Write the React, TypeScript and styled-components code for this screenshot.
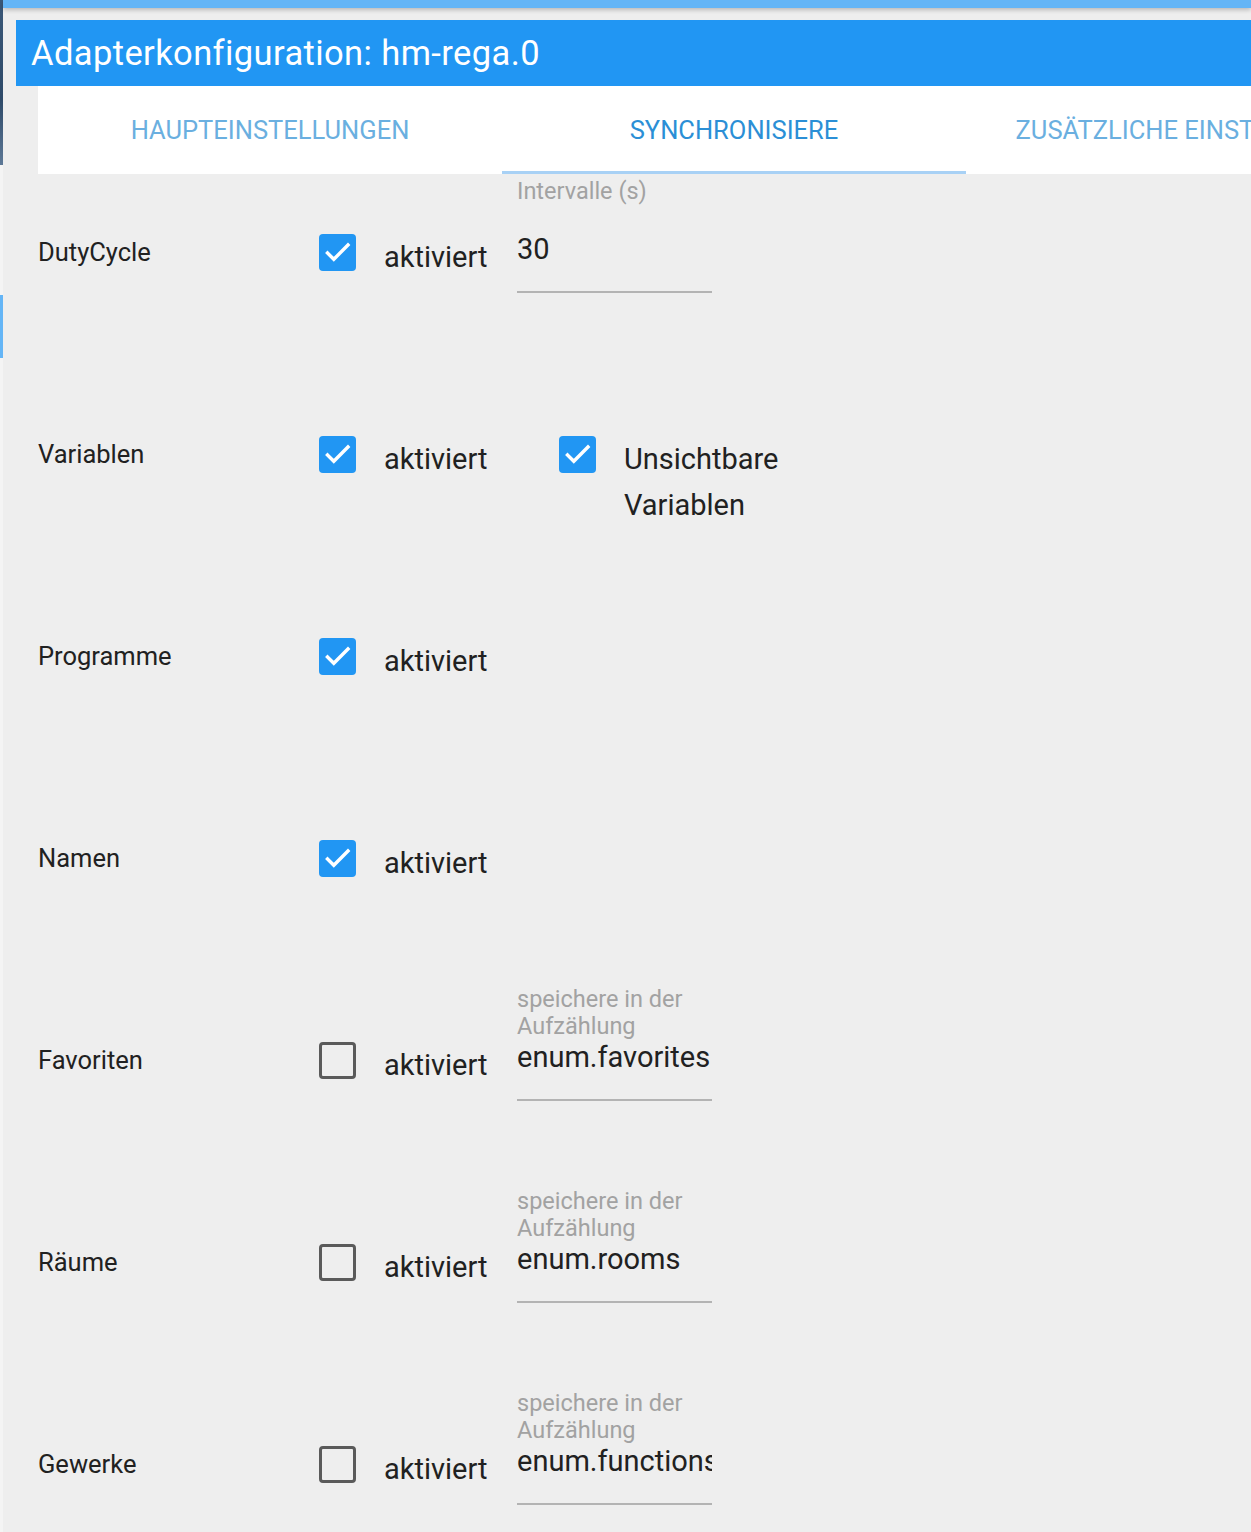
import React from 'react';
import styled, { createGlobalStyle } from 'styled-components';

//styles
const GlobalStyle = createGlobalStyle`
  html, body {
    margin: 0;
    padding: 0;
    background-color: #eeeeee;
    font-family: Roboto, "Liberation Sans", Arial, sans-serif;
  }
  * {
    box-sizing: border-box;
  }
`;

const colors = {
  blue: '#2196f3',
  lightBlue: '#64b5f6',
  tabText: '#6aafe0',
  tabActive: '#2b8fd6',
  tabLine: '#a8d1f5',
  text: '#212121',
  hint: '#a2a2a2',
  line: '#b3b3b3',
  bg: '#eeeeee',
};

//styled
const Page = styled.div`
  display: flex;
  width: 100%;
  height: 1532px;
  overflow: hidden;
  background-color: ${colors.bg};
`;

const EdgeStrip = styled.div`
  display: flex;
  flex-direction: column;
  flex-shrink: 0;
  width: 3px;
  background-color: #f4f4f4;
`;

const EdgeSegment = styled.div<{ $h: number; $top: number; $color: string }>`
  flex-shrink: 0;
  height: ${(p) => p.$h}px;
  margin-top: ${(p) => p.$top}px;
  background: ${(p) => p.$color};
`;

const Main = styled.div`
  flex: 1;
  min-width: 0;
  display: flex;
  flex-direction: column;
  & > * {
    flex-shrink: 0;
  }
`;

const TopBar = styled.div`
  height: 8px;
  background-color: ${colors.lightBlue};
  box-shadow: 0 2px 4px rgba(0, 0, 0, 0.22);
`;

const Header = styled.div`
  display: flex;
  align-items: center;
  height: 66px;
  margin: 12px 0 0 13px;
  padding-left: 15px;
  background-color: ${colors.blue};
  color: #fff;
  font-size: 34.5px;
  letter-spacing: 0.4px;
  white-space: nowrap;
`;

const Tabs = styled.div`
  display: flex;
  height: 88px;
  margin-left: 35px;
  background-color: #fff;
  overflow: hidden;
`;

const Tab = styled.div<{ $active?: boolean }>`
  flex-shrink: 0;
  width: 464px;
  display: flex;
  align-items: center;
  justify-content: center;
  font-size: 25.5px;
  text-transform: uppercase;
  white-space: nowrap;
  color: ${(p) => (p.$active ? colors.tabActive : colors.tabText)};
  border-bottom: 3px solid ${(p) => (p.$active ? colors.tabLine : 'transparent')};
  padding-top: 3px;
`;

const Content = styled.div`
  padding-left: 35px;
`;

const Row = styled.div`
  display: flex;
  align-items: flex-start;
  height: 202px;
`;

const RowLabel = styled.div`
  width: 281px;
  flex-shrink: 0;
  margin-top: 63px;
  font-size: 25.5px;
  line-height: 30px;
  color: ${colors.text};
`;

const CheckGroup = styled.label<{ $gap?: number }>`
  display: flex;
  align-items: flex-start;
  flex-shrink: 0;
  margin-left: ${(p) => p.$gap || 0}px;
`;

const Box = styled.span<{ $checked: boolean }>`
  display: flex;
  flex-shrink: 0;
  width: 37px;
  height: 37px;
  margin-top: 60px;
  border-radius: 4px;
  background-color: ${(p) => (p.$checked ? colors.blue : 'transparent')};
  border: ${(p) => (p.$checked ? 'none' : '3.5px solid #5a5a5a')};
`;

const CheckText = styled.span<{ $width?: number }>`
  margin-left: 28px;
  margin-top: 60px;
  width: ${(p) => (p.$width ? `${p.$width}px` : 'auto')};
  max-width: 180px;
  font-size: 29px;
  line-height: 46px;
  color: ${colors.text};
`;

const InputBlock = styled.div`
  display: flex;
  flex-direction: column;
  width: 195px;
  margin-left: 28px;
  flex-shrink: 0;
`;

const InputLabel = styled.div`
  height: 58px;
  padding-top: 4px;
  font-size: 23.5px;
  line-height: 27px;
  color: ${colors.hint};
`;

const InputField = styled.input`
  width: 195px;
  height: 61px;
  padding: 0 0 25px 0;
  margin: 0;
  border: none;
  border-bottom: 2.5px solid ${colors.line};
  background: transparent;
  font-family: inherit;
  font-size: 29px;
  line-height: 34px;
  color: ${colors.text};
  outline: none;
`;

//components
const Check: React.FC<{ checked: boolean }> = ({ checked }) => (
  <Box $checked={checked}>
    {checked && (
      <svg width="37" height="37" viewBox="0 0 37 37">
        <polyline
          points="8.5,19 14.8,25.3 29,11"
          fill="none"
          stroke="#fff"
          strokeWidth="3.4"
          strokeLinecap="square"
        />
      </svg>
    )}
  </Box>
);

interface RowData {
  label: string;
  checked: boolean;
  hint?: string;
  value?: string;
  extra?: string;
}

const rows: RowData[] = [
  { label: 'DutyCycle', checked: true, hint: 'Intervalle (s)', value: '30' },
  { label: 'Variablen', checked: true, extra: 'Unsichtbare Variablen' },
  { label: 'Programme', checked: true },
  { label: 'Namen', checked: true },
  { label: 'Favoriten', checked: false, hint: 'speichere in der Aufzählung', value: 'enum.favorites' },
  { label: 'Räume', checked: false, hint: 'speichere in der Aufzählung', value: 'enum.rooms' },
  { label: 'Gewerke', checked: false, hint: 'speichere in der Aufzählung', value: 'enum.functions' },
];

const App: React.FC = () => {
  return (
    <Page>
      <GlobalStyle />
      <EdgeStrip>
        <EdgeSegment $h={165} $top={0} $color="linear-gradient(180deg, #3b5878 0%, #2e4a69 60%, #5d7896 100%)" />
        <EdgeSegment $h={63} $top={130} $color={colors.lightBlue} />
      </EdgeStrip>
      <Main>
        <TopBar />
        <Header>Adapterkonfiguration: hm-rega.0</Header>
        <Tabs>
          <Tab>Haupteinstellungen</Tab>
          <Tab $active>Synchronisiere</Tab>
          <Tab>Zusätzliche Einstellungen</Tab>
        </Tabs>
        <Content>
          {rows.map((r) => (
            <Row key={r.label}>
              <RowLabel>{r.label}</RowLabel>
              <CheckGroup>
                <Check checked={r.checked} />
                <CheckText $width={105}>aktiviert</CheckText>
              </CheckGroup>
              {r.hint && (
                <InputBlock>
                  <InputLabel>{r.hint}</InputLabel>
                  <InputField readOnly defaultValue={r.value} />
                </InputBlock>
              )}
              {r.extra && (
                <CheckGroup $gap={70}>
                  <Check checked />
                  <CheckText>{r.extra}</CheckText>
                </CheckGroup>
              )}
            </Row>
          ))}
        </Content>
      </Main>
    </Page>
  );
};

export default App;
